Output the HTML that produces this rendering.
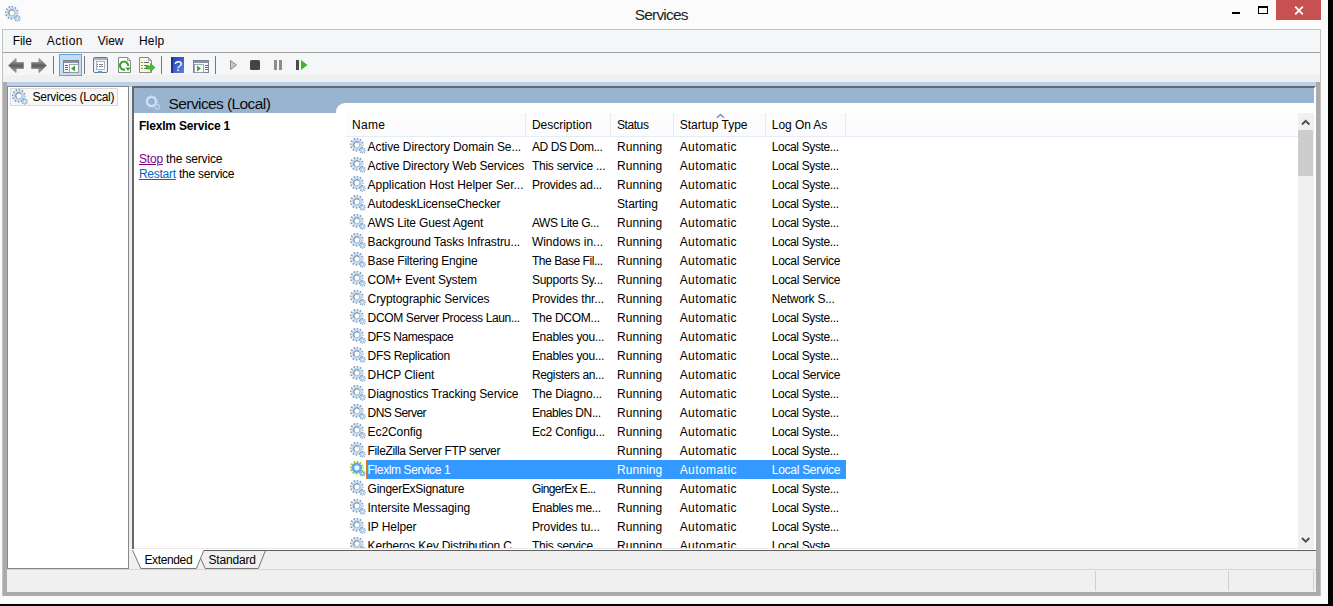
<!DOCTYPE html>
<html><head><meta charset="utf-8"><title>Services</title>
<style>
*{box-sizing:border-box;margin:0;padding:0}
html,body{width:1333px;height:606px;overflow:hidden;background:#000}
body{font-family:"Liberation Sans",sans-serif;font-size:12px;color:#000;position:relative}
div,span,svg{position:absolute;white-space:nowrap}
.t{white-space:pre}
#win{left:0;top:0;width:1328px;height:604px;background:#fbfbfb}
#min{left:1232px;top:12px;width:8px;height:2px;background:#000}
#max{left:1258px;top:6px;width:10px;height:8px;border:1px solid #000;border-top-width:2px}
#close{left:1276px;top:0;width:45px;height:20px;background:#c75050}
#frame{left:2px;top:29px;width:1319px;height:567px;background:#f0f0f0;border:1px solid #c2c2c2;border-bottom:0}
#menu{left:3px;top:30px;width:1317px;height:22px;background:#f5f6f7}
#menuline{left:3px;top:52px;width:1317px;height:1px;background:#a0a0a0}
#tool{left:3px;top:53px;width:1317px;height:22px;background:#f5f6f7}
#gl{left:3px;top:82px;width:4px;height:514px;background:#ababab}
#gr{left:1316px;top:82px;width:4px;height:514px;background:#ababab}
#gb{left:3px;top:592px;width:1317px;height:4px;background:#ababab}
#bluestrip{left:7px;top:82px;width:1309px;height:5px;background:#b9d1ea}
#tree{left:7px;top:86px;width:122px;height:483px;background:#fff;border:1px solid #828790}
#treeitem{left:10px;top:88px;width:108px;height:18px;background:#f7f7f7;border:1px solid #dadada}
#right{left:132px;top:86px;width:1184px;height:463px;background:#fff;border-top:2px solid #696969;border-left:2px solid #696969;border-right:2px solid #fdfdfd}
#hdr{left:134px;top:88px;width:1180px;height:25px;background:#99b4d1}
#list{left:336px;top:103px;width:978px;height:445px;background:#fff;border-top-left-radius:9px}
#lh{left:346px;top:113px;width:952px;height:24px;background:#fcfcfd;border-bottom:1px solid #e3ecf7}
.cs{top:113px;width:1px;height:23px;background:#e6ebf2}
#sel{left:366px;top:460px;width:480px;height:19px;background:#3399ff;border:1px dotted #d07a2a}
#sb{left:1298px;top:113px;width:16px;height:435px;background:#f0f0f0}
#thumb{left:1298px;top:130px;width:15px;height:46px;background:#cdcdcd}
#clip{left:0;top:0;width:1333px;height:548px;overflow:hidden}
#cov1{left:134px;top:548px;width:1180px;height:1px;background:#e9e9e9}
#cov2{left:134px;top:549px;width:1182px;height:1px;background:#fff}
#cov3{left:204px;top:550px;width:1112px;height:1px;background:#5e5e5e}
#tabs{left:132px;top:549px;width:1184px;height:21px}
#statline{left:7px;top:569px;width:1309px;height:1px;background:#d7d7d7}
.ss{top:571px;width:1px;height:20px;background:#d0d0d0}
</style></head><body>
<div id="win"></div>
<div id="min"></div><div id="max"></div>
<div id="close"><svg style="left:18px;top:6px;width:10px;height:9px" viewBox="0 0 10 9"><path d="M1.2 0.7L8.8 8.3M8.8 0.7L1.2 8.3" stroke="#fff" stroke-width="1.8" fill="none"/></svg></div>
<div id="frame"></div>
<div id="menu"></div>
<div id="menuline"></div>
<div id="tool"></div>
<svg id="tbsvg" style="left:0;top:53px;width:330px;height:24px" viewBox="0 53 330 24">
<defs>
<linearGradient id="ga" x1="0" y1="0" x2="0" y2="1"><stop offset="0" stop-color="#b8b8b8"/><stop offset=".5" stop-color="#5e5e5e"/><stop offset="1" stop-color="#a0a0a0"/></linearGradient>
<linearGradient id="gh" x1="0" y1="0" x2="1" y2="1"><stop offset="0" stop-color="#1f3fa8"/><stop offset="1" stop-color="#5b7fe0"/></linearGradient>
</defs>
<!-- back / forward -->
<path d="M8.5 65.5L16 58.5V62.5H23.5V68.5H16V72.5Z" fill="url(#ga)" stroke="#8e8e8e" stroke-width="1"/>
<path d="M46.5 65.5L39 58.5V62.5H31.5V68.5H39V72.5Z" fill="url(#ga)" stroke="#8e8e8e" stroke-width="1"/>
<rect x="53" y="56" width="1" height="18" fill="#777"/>
<!-- selected button -->
<rect x="59.5" y="54.5" width="22" height="21" fill="#c4dcf6" stroke="#62a2e4"/>
<rect x="63.5" y="60.5" width="15" height="12" fill="#f4f6fa" stroke="#7a8292"/>
<rect x="64" y="61" width="14" height="2" fill="#8a93a5"/>
<rect x="69.5" y="64.5" width="9" height="8" fill="#fdfdfd" stroke="#8a93a5" stroke-width=".8"/>
<path d="M65 65.5h3M65 67.5h3M65 69.5h3" stroke="#3a6fd0" stroke-width="1"/>
<path d="M71 68.5L75 65.5V71.5Z" fill="#3aa828"/>
<rect x="84" y="56" width="1" height="18" fill="#777"/>
<!-- properties -->
<rect x="93.500" y="57.5" width="14" height="15" rx="1.5" fill="#f2f4f8" stroke="#6d7380"/>
<rect x="94" y="58" width="13" height="2" fill="#aab2c2"/>
<rect x="96.500" y="61.5" width="8" height="8" fill="#fff" stroke="#9aa2b0" stroke-width=".8"/>
<path d="M99 64.500h4M99 66.500h4" stroke="#7a8292" stroke-width="1"/>
<path d="M97 64.500h1M97 66.500h1" stroke="#2a8ae0" stroke-width="1"/>
<rect x="98" y="71" width="4" height="2" fill="#2aa8f0"/>
<!-- refresh -->
<path d="M118.500 57.500H127.500L130.500 60.500V72.500H118.500Z" fill="#fff" stroke="#8a8a8a"/>
<path d="M127.500 57.500V60.500H130.500" fill="none" stroke="#8a8a8a" stroke-width=".8"/>
<path d="M128 66a4 4 0 1 0 -3 3.400" fill="none" stroke="#35a525" stroke-width="2.200"/>
<path d="M125.500 67.500H130.500L128 71Z" fill="#35a525"/>
<!-- export -->
<path d="M139.500 57.500H148.500L151.500 60.500V72.500H139.500Z" fill="#fbf6d9" stroke="#8a8a8a"/>
<path d="M148.500 57.500V60.500H151.500" fill="none" stroke="#8a8a8a" stroke-width=".8"/>
<path d="M144 62.500h5M144 65.500h4M144 68.500h4" stroke="#6a6a8a" stroke-width="1"/>
<path d="M141.500 62.500h1M141.500 65.500h1M141.500 68.500h1" stroke="#222" stroke-width="1"/>
<path d="M146 66h4.500V63.500L155 67.500L150.500 71.500V69H146Z" fill="#49b838" stroke="#2e9a22" stroke-width=".6"/>
<rect x="161" y="56" width="1" height="18" fill="#777"/>
<!-- help -->
<rect x="171" y="57" width="13" height="16" fill="url(#gh)"/>
<rect x="171" y="57" width="2" height="16" fill="#1b3596"/>
<text x="178.200" y="70.500" font-family="Liberation Sans, sans-serif" font-size="15" fill="#fff" text-anchor="middle">?</text>
<!-- action pane -->
<rect x="193.500" y="60.500" width="15" height="12" fill="#f4f6fa" stroke="#7a8292"/>
<rect x="194" y="61" width="14" height="2" fill="#8a93a5"/>
<rect x="194.500" y="64.500" width="9" height="8" fill="#fdfdfd" stroke="#8a93a5" stroke-width=".8"/>
<path d="M205 65.500h3M205 67.500h3M205 69.500h3" stroke="#3a6fd0" stroke-width="1"/>
<path d="M201 68.500L197 65.500V71.500Z" fill="#3aa828"/>
<rect x="215" y="56" width="1" height="18" fill="#777"/>
<!-- play -->
<path d="M230.500 60.500L236.500 65L230.500 69.500Z" fill="#c8c8c8" stroke="#8a8a8a"/>
<!-- stop -->
<rect x="250" y="60" width="10" height="10" rx="1.500" fill="#444"/>
<!-- pause -->
<rect x="274" y="60" width="3" height="10" fill="#8c8c8c"/>
<rect x="279" y="60" width="3" height="10" fill="#8c8c8c"/>
<!-- resume -->
<rect x="296" y="60" width="3" height="10" fill="#4a4a4a"/>
<path d="M301 60L307.500 65L301 70Z" fill="#3db824"/>
</svg>

<div id="gl"></div><div id="gr"></div><div id="gb"></div>
<div id="bluestrip"></div>
<div id="tree"></div>
<div id="treeitem"></div>
<div id="right"></div>
<div id="hdr"></div>
<div id="list"></div>
<div id="lh"></div>
<div class="cs" style="left:525px"></div><div class="cs" style="left:610px"></div><div class="cs" style="left:673px"></div><div class="cs" style="left:765px"></div><div class="cs" style="left:845px"></div>
<svg style="left:716px;top:113px;width:9px;height:6px" viewBox="0 0 9 6"><path d="M1 4.800L4.500 1.500L8 4.800" fill="none" stroke="#6f8fb3" stroke-width="1.300"/></svg>
<div id="sel"></div>
<div id="sb"></div><div id="thumb"></div>
<svg style="left:1298px;top:113px;width:16px;height:435px" viewBox="0 0 16 435"><path d="M4 11.500L7.700 7.800L11.400 11.500" fill="none" stroke="#505050" stroke-width="2"/><path d="M4 425L7.700 428.700L11.400 425" fill="none" stroke="#505050" stroke-width="2"/></svg>
<svg id="tabs" viewBox="132 549 1184 21">
<rect x="132" y="549" width="1184" height="1" fill="#fff"/>
<rect x="203" y="550" width="1113" height="1" fill="#696969"/>
<path d="M197 550.500L205.200 568.500H258.300L265.500 550.500" fill="#f0f0f0" stroke="#777" stroke-width="1"/>
<path d="M132.500 550L140.800 568.500H196.400L203.800 550Z" fill="#fff"/>
<path d="M132.500 550L140.800 568.500H196.400L203.800 550.500" fill="none" stroke="#777" stroke-width="1"/>
</svg>
<div id="statline"></div>
<div class="ss" style="left:1095px"></div><div class="ss" style="left:1228px"></div><div class="ss" style="left:1313px"></div>
<svg style="left:5px;top:6px;width:16px;height:16px" viewBox="0 0 16 16"><circle cx="6.75" cy="6.75" r="6" fill="none" stroke="#7c9ec4" stroke-width="1.8" stroke-dasharray="1.7 1.4416" stroke-dashoffset="0.85"/><circle cx="6.75" cy="6.75" r="4.1" fill="#fff" stroke="#c0d9f1" stroke-width="2.3"/><circle cx="6.75" cy="6.75" r="3.05" fill="none" stroke="#a3b1c0" stroke-width="0.8"/><path d="M4.6 8.9A3.05 3.05 0 0 1 8.9 4.6" fill="none" stroke="#6c737b" stroke-width="0.8"/><circle cx="12.5" cy="12.5" r="2.7" fill="none" stroke="#7fa3c9" stroke-width="1.3" stroke-dasharray="1.1 1.0206" stroke-dashoffset="0.55"/><circle cx="12.5" cy="12.5" r="1.7" fill="#fff" stroke="#a6c3e1" stroke-width="1.3"/></svg>
<svg style="left:12px;top:89px;width:16px;height:16px" viewBox="0 0 16 16"><circle cx="6.75" cy="6.75" r="6" fill="none" stroke="#7c9ec4" stroke-width="1.8" stroke-dasharray="1.7 1.4416" stroke-dashoffset="0.85"/><circle cx="6.75" cy="6.75" r="4.1" fill="#fff" stroke="#c0d9f1" stroke-width="2.3"/><circle cx="6.75" cy="6.75" r="3.05" fill="none" stroke="#a3b1c0" stroke-width="0.8"/><path d="M4.6 8.9A3.05 3.05 0 0 1 8.9 4.6" fill="none" stroke="#6c737b" stroke-width="0.8"/><circle cx="12.5" cy="12.5" r="2.7" fill="none" stroke="#7fa3c9" stroke-width="1.3" stroke-dasharray="1.1 1.0206" stroke-dashoffset="0.55"/><circle cx="12.5" cy="12.5" r="1.7" fill="#fff" stroke="#a6c3e1" stroke-width="1.3"/></svg>
<svg style="left:145px;top:95px;width:16px;height:16px" viewBox="0 0 16 16"><circle cx="6.500" cy="6.500" r="4.300" fill="none" stroke="#d3e4f5" stroke-width="2.400"/><circle cx="6.500" cy="6.500" r="5.700" fill="none" stroke="#bdd3ea" stroke-width="1.200" stroke-dasharray="1.800 1.800"/><circle cx="6.500" cy="6.500" r="2.900" fill="none" stroke="#8ea3ba" stroke-width=".800"/><circle cx="12.300" cy="12" r="2.200" fill="none" stroke="#b9cfe6" stroke-width="1.500"/></svg>
<div id="clip">
<svg style="left:350px;top:138px;width:16px;height:16px" viewBox="0 0 16 16"><circle cx="6.75" cy="6.75" r="6" fill="none" stroke="#7c9ec4" stroke-width="1.8" stroke-dasharray="1.7 1.4416" stroke-dashoffset="0.85"/><circle cx="6.75" cy="6.75" r="4.1" fill="#fff" stroke="#c0d9f1" stroke-width="2.3"/><circle cx="6.75" cy="6.75" r="3.05" fill="none" stroke="#a3b1c0" stroke-width="0.8"/><path d="M4.6 8.9A3.05 3.05 0 0 1 8.9 4.6" fill="none" stroke="#6c737b" stroke-width="0.8"/><circle cx="12.5" cy="12.5" r="2.7" fill="none" stroke="#7fa3c9" stroke-width="1.3" stroke-dasharray="1.1 1.0206" stroke-dashoffset="0.55"/><circle cx="12.5" cy="12.5" r="1.7" fill="#fff" stroke="#a6c3e1" stroke-width="1.3"/></svg>
<svg style="left:350px;top:157px;width:16px;height:16px" viewBox="0 0 16 16"><circle cx="6.75" cy="6.75" r="6" fill="none" stroke="#7c9ec4" stroke-width="1.8" stroke-dasharray="1.7 1.4416" stroke-dashoffset="0.85"/><circle cx="6.75" cy="6.75" r="4.1" fill="#fff" stroke="#c0d9f1" stroke-width="2.3"/><circle cx="6.75" cy="6.75" r="3.05" fill="none" stroke="#a3b1c0" stroke-width="0.8"/><path d="M4.6 8.9A3.05 3.05 0 0 1 8.9 4.6" fill="none" stroke="#6c737b" stroke-width="0.8"/><circle cx="12.5" cy="12.5" r="2.7" fill="none" stroke="#7fa3c9" stroke-width="1.3" stroke-dasharray="1.1 1.0206" stroke-dashoffset="0.55"/><circle cx="12.5" cy="12.5" r="1.7" fill="#fff" stroke="#a6c3e1" stroke-width="1.3"/></svg>
<svg style="left:350px;top:176px;width:16px;height:16px" viewBox="0 0 16 16"><circle cx="6.75" cy="6.75" r="6" fill="none" stroke="#7c9ec4" stroke-width="1.8" stroke-dasharray="1.7 1.4416" stroke-dashoffset="0.85"/><circle cx="6.75" cy="6.75" r="4.1" fill="#fff" stroke="#c0d9f1" stroke-width="2.3"/><circle cx="6.75" cy="6.75" r="3.05" fill="none" stroke="#a3b1c0" stroke-width="0.8"/><path d="M4.6 8.9A3.05 3.05 0 0 1 8.9 4.6" fill="none" stroke="#6c737b" stroke-width="0.8"/><circle cx="12.5" cy="12.5" r="2.7" fill="none" stroke="#7fa3c9" stroke-width="1.3" stroke-dasharray="1.1 1.0206" stroke-dashoffset="0.55"/><circle cx="12.5" cy="12.5" r="1.7" fill="#fff" stroke="#a6c3e1" stroke-width="1.3"/></svg>
<svg style="left:350px;top:195px;width:16px;height:16px" viewBox="0 0 16 16"><circle cx="6.75" cy="6.75" r="6" fill="none" stroke="#7c9ec4" stroke-width="1.8" stroke-dasharray="1.7 1.4416" stroke-dashoffset="0.85"/><circle cx="6.75" cy="6.75" r="4.1" fill="#fff" stroke="#c0d9f1" stroke-width="2.3"/><circle cx="6.75" cy="6.75" r="3.05" fill="none" stroke="#a3b1c0" stroke-width="0.8"/><path d="M4.6 8.9A3.05 3.05 0 0 1 8.9 4.6" fill="none" stroke="#6c737b" stroke-width="0.8"/><circle cx="12.5" cy="12.5" r="2.7" fill="none" stroke="#7fa3c9" stroke-width="1.3" stroke-dasharray="1.1 1.0206" stroke-dashoffset="0.55"/><circle cx="12.5" cy="12.5" r="1.7" fill="#fff" stroke="#a6c3e1" stroke-width="1.3"/></svg>
<svg style="left:350px;top:214px;width:16px;height:16px" viewBox="0 0 16 16"><circle cx="6.75" cy="6.75" r="6" fill="none" stroke="#7c9ec4" stroke-width="1.8" stroke-dasharray="1.7 1.4416" stroke-dashoffset="0.85"/><circle cx="6.75" cy="6.75" r="4.1" fill="#fff" stroke="#c0d9f1" stroke-width="2.3"/><circle cx="6.75" cy="6.75" r="3.05" fill="none" stroke="#a3b1c0" stroke-width="0.8"/><path d="M4.6 8.9A3.05 3.05 0 0 1 8.9 4.6" fill="none" stroke="#6c737b" stroke-width="0.8"/><circle cx="12.5" cy="12.5" r="2.7" fill="none" stroke="#7fa3c9" stroke-width="1.3" stroke-dasharray="1.1 1.0206" stroke-dashoffset="0.55"/><circle cx="12.5" cy="12.5" r="1.7" fill="#fff" stroke="#a6c3e1" stroke-width="1.3"/></svg>
<svg style="left:350px;top:233px;width:16px;height:16px" viewBox="0 0 16 16"><circle cx="6.75" cy="6.75" r="6" fill="none" stroke="#7c9ec4" stroke-width="1.8" stroke-dasharray="1.7 1.4416" stroke-dashoffset="0.85"/><circle cx="6.75" cy="6.75" r="4.1" fill="#fff" stroke="#c0d9f1" stroke-width="2.3"/><circle cx="6.75" cy="6.75" r="3.05" fill="none" stroke="#a3b1c0" stroke-width="0.8"/><path d="M4.6 8.9A3.05 3.05 0 0 1 8.9 4.6" fill="none" stroke="#6c737b" stroke-width="0.8"/><circle cx="12.5" cy="12.5" r="2.7" fill="none" stroke="#7fa3c9" stroke-width="1.3" stroke-dasharray="1.1 1.0206" stroke-dashoffset="0.55"/><circle cx="12.5" cy="12.5" r="1.7" fill="#fff" stroke="#a6c3e1" stroke-width="1.3"/></svg>
<svg style="left:350px;top:252px;width:16px;height:16px" viewBox="0 0 16 16"><circle cx="6.75" cy="6.75" r="6" fill="none" stroke="#7c9ec4" stroke-width="1.8" stroke-dasharray="1.7 1.4416" stroke-dashoffset="0.85"/><circle cx="6.75" cy="6.75" r="4.1" fill="#fff" stroke="#c0d9f1" stroke-width="2.3"/><circle cx="6.75" cy="6.75" r="3.05" fill="none" stroke="#a3b1c0" stroke-width="0.8"/><path d="M4.6 8.9A3.05 3.05 0 0 1 8.9 4.6" fill="none" stroke="#6c737b" stroke-width="0.8"/><circle cx="12.5" cy="12.5" r="2.7" fill="none" stroke="#7fa3c9" stroke-width="1.3" stroke-dasharray="1.1 1.0206" stroke-dashoffset="0.55"/><circle cx="12.5" cy="12.5" r="1.7" fill="#fff" stroke="#a6c3e1" stroke-width="1.3"/></svg>
<svg style="left:350px;top:271px;width:16px;height:16px" viewBox="0 0 16 16"><circle cx="6.75" cy="6.75" r="6" fill="none" stroke="#7c9ec4" stroke-width="1.8" stroke-dasharray="1.7 1.4416" stroke-dashoffset="0.85"/><circle cx="6.75" cy="6.75" r="4.1" fill="#fff" stroke="#c0d9f1" stroke-width="2.3"/><circle cx="6.75" cy="6.75" r="3.05" fill="none" stroke="#a3b1c0" stroke-width="0.8"/><path d="M4.6 8.9A3.05 3.05 0 0 1 8.9 4.6" fill="none" stroke="#6c737b" stroke-width="0.8"/><circle cx="12.5" cy="12.5" r="2.7" fill="none" stroke="#7fa3c9" stroke-width="1.3" stroke-dasharray="1.1 1.0206" stroke-dashoffset="0.55"/><circle cx="12.5" cy="12.5" r="1.7" fill="#fff" stroke="#a6c3e1" stroke-width="1.3"/></svg>
<svg style="left:350px;top:290px;width:16px;height:16px" viewBox="0 0 16 16"><circle cx="6.75" cy="6.75" r="6" fill="none" stroke="#7c9ec4" stroke-width="1.8" stroke-dasharray="1.7 1.4416" stroke-dashoffset="0.85"/><circle cx="6.75" cy="6.75" r="4.1" fill="#fff" stroke="#c0d9f1" stroke-width="2.3"/><circle cx="6.75" cy="6.75" r="3.05" fill="none" stroke="#a3b1c0" stroke-width="0.8"/><path d="M4.6 8.9A3.05 3.05 0 0 1 8.9 4.6" fill="none" stroke="#6c737b" stroke-width="0.8"/><circle cx="12.5" cy="12.5" r="2.7" fill="none" stroke="#7fa3c9" stroke-width="1.3" stroke-dasharray="1.1 1.0206" stroke-dashoffset="0.55"/><circle cx="12.5" cy="12.5" r="1.7" fill="#fff" stroke="#a6c3e1" stroke-width="1.3"/></svg>
<svg style="left:350px;top:309px;width:16px;height:16px" viewBox="0 0 16 16"><circle cx="6.75" cy="6.75" r="6" fill="none" stroke="#7c9ec4" stroke-width="1.8" stroke-dasharray="1.7 1.4416" stroke-dashoffset="0.85"/><circle cx="6.75" cy="6.75" r="4.1" fill="#fff" stroke="#c0d9f1" stroke-width="2.3"/><circle cx="6.75" cy="6.75" r="3.05" fill="none" stroke="#a3b1c0" stroke-width="0.8"/><path d="M4.6 8.9A3.05 3.05 0 0 1 8.9 4.6" fill="none" stroke="#6c737b" stroke-width="0.8"/><circle cx="12.5" cy="12.5" r="2.7" fill="none" stroke="#7fa3c9" stroke-width="1.3" stroke-dasharray="1.1 1.0206" stroke-dashoffset="0.55"/><circle cx="12.5" cy="12.5" r="1.7" fill="#fff" stroke="#a6c3e1" stroke-width="1.3"/></svg>
<svg style="left:350px;top:328px;width:16px;height:16px" viewBox="0 0 16 16"><circle cx="6.75" cy="6.75" r="6" fill="none" stroke="#7c9ec4" stroke-width="1.8" stroke-dasharray="1.7 1.4416" stroke-dashoffset="0.85"/><circle cx="6.75" cy="6.75" r="4.1" fill="#fff" stroke="#c0d9f1" stroke-width="2.3"/><circle cx="6.75" cy="6.75" r="3.05" fill="none" stroke="#a3b1c0" stroke-width="0.8"/><path d="M4.6 8.9A3.05 3.05 0 0 1 8.9 4.6" fill="none" stroke="#6c737b" stroke-width="0.8"/><circle cx="12.5" cy="12.5" r="2.7" fill="none" stroke="#7fa3c9" stroke-width="1.3" stroke-dasharray="1.1 1.0206" stroke-dashoffset="0.55"/><circle cx="12.5" cy="12.5" r="1.7" fill="#fff" stroke="#a6c3e1" stroke-width="1.3"/></svg>
<svg style="left:350px;top:347px;width:16px;height:16px" viewBox="0 0 16 16"><circle cx="6.75" cy="6.75" r="6" fill="none" stroke="#7c9ec4" stroke-width="1.8" stroke-dasharray="1.7 1.4416" stroke-dashoffset="0.85"/><circle cx="6.75" cy="6.75" r="4.1" fill="#fff" stroke="#c0d9f1" stroke-width="2.3"/><circle cx="6.75" cy="6.75" r="3.05" fill="none" stroke="#a3b1c0" stroke-width="0.8"/><path d="M4.6 8.9A3.05 3.05 0 0 1 8.9 4.6" fill="none" stroke="#6c737b" stroke-width="0.8"/><circle cx="12.5" cy="12.5" r="2.7" fill="none" stroke="#7fa3c9" stroke-width="1.3" stroke-dasharray="1.1 1.0206" stroke-dashoffset="0.55"/><circle cx="12.5" cy="12.5" r="1.7" fill="#fff" stroke="#a6c3e1" stroke-width="1.3"/></svg>
<svg style="left:350px;top:366px;width:16px;height:16px" viewBox="0 0 16 16"><circle cx="6.75" cy="6.75" r="6" fill="none" stroke="#7c9ec4" stroke-width="1.8" stroke-dasharray="1.7 1.4416" stroke-dashoffset="0.85"/><circle cx="6.75" cy="6.75" r="4.1" fill="#fff" stroke="#c0d9f1" stroke-width="2.3"/><circle cx="6.75" cy="6.75" r="3.05" fill="none" stroke="#a3b1c0" stroke-width="0.8"/><path d="M4.6 8.9A3.05 3.05 0 0 1 8.9 4.6" fill="none" stroke="#6c737b" stroke-width="0.8"/><circle cx="12.5" cy="12.5" r="2.7" fill="none" stroke="#7fa3c9" stroke-width="1.3" stroke-dasharray="1.1 1.0206" stroke-dashoffset="0.55"/><circle cx="12.5" cy="12.5" r="1.7" fill="#fff" stroke="#a6c3e1" stroke-width="1.3"/></svg>
<svg style="left:350px;top:385px;width:16px;height:16px" viewBox="0 0 16 16"><circle cx="6.75" cy="6.75" r="6" fill="none" stroke="#7c9ec4" stroke-width="1.8" stroke-dasharray="1.7 1.4416" stroke-dashoffset="0.85"/><circle cx="6.75" cy="6.75" r="4.1" fill="#fff" stroke="#c0d9f1" stroke-width="2.3"/><circle cx="6.75" cy="6.75" r="3.05" fill="none" stroke="#a3b1c0" stroke-width="0.8"/><path d="M4.6 8.9A3.05 3.05 0 0 1 8.9 4.6" fill="none" stroke="#6c737b" stroke-width="0.8"/><circle cx="12.5" cy="12.5" r="2.7" fill="none" stroke="#7fa3c9" stroke-width="1.3" stroke-dasharray="1.1 1.0206" stroke-dashoffset="0.55"/><circle cx="12.5" cy="12.5" r="1.7" fill="#fff" stroke="#a6c3e1" stroke-width="1.3"/></svg>
<svg style="left:350px;top:404px;width:16px;height:16px" viewBox="0 0 16 16"><circle cx="6.75" cy="6.75" r="6" fill="none" stroke="#7c9ec4" stroke-width="1.8" stroke-dasharray="1.7 1.4416" stroke-dashoffset="0.85"/><circle cx="6.75" cy="6.75" r="4.1" fill="#fff" stroke="#c0d9f1" stroke-width="2.3"/><circle cx="6.75" cy="6.75" r="3.05" fill="none" stroke="#a3b1c0" stroke-width="0.8"/><path d="M4.6 8.9A3.05 3.05 0 0 1 8.9 4.6" fill="none" stroke="#6c737b" stroke-width="0.8"/><circle cx="12.5" cy="12.5" r="2.7" fill="none" stroke="#7fa3c9" stroke-width="1.3" stroke-dasharray="1.1 1.0206" stroke-dashoffset="0.55"/><circle cx="12.5" cy="12.5" r="1.7" fill="#fff" stroke="#a6c3e1" stroke-width="1.3"/></svg>
<svg style="left:350px;top:423px;width:16px;height:16px" viewBox="0 0 16 16"><circle cx="6.75" cy="6.75" r="6" fill="none" stroke="#7c9ec4" stroke-width="1.8" stroke-dasharray="1.7 1.4416" stroke-dashoffset="0.85"/><circle cx="6.75" cy="6.75" r="4.1" fill="#fff" stroke="#c0d9f1" stroke-width="2.3"/><circle cx="6.75" cy="6.75" r="3.05" fill="none" stroke="#a3b1c0" stroke-width="0.8"/><path d="M4.6 8.9A3.05 3.05 0 0 1 8.9 4.6" fill="none" stroke="#6c737b" stroke-width="0.8"/><circle cx="12.5" cy="12.5" r="2.7" fill="none" stroke="#7fa3c9" stroke-width="1.3" stroke-dasharray="1.1 1.0206" stroke-dashoffset="0.55"/><circle cx="12.5" cy="12.5" r="1.7" fill="#fff" stroke="#a6c3e1" stroke-width="1.3"/></svg>
<svg style="left:350px;top:442px;width:16px;height:16px" viewBox="0 0 16 16"><circle cx="6.75" cy="6.75" r="6" fill="none" stroke="#7c9ec4" stroke-width="1.8" stroke-dasharray="1.7 1.4416" stroke-dashoffset="0.85"/><circle cx="6.75" cy="6.75" r="4.1" fill="#fff" stroke="#c0d9f1" stroke-width="2.3"/><circle cx="6.75" cy="6.75" r="3.05" fill="none" stroke="#a3b1c0" stroke-width="0.8"/><path d="M4.6 8.9A3.05 3.05 0 0 1 8.9 4.6" fill="none" stroke="#6c737b" stroke-width="0.8"/><circle cx="12.5" cy="12.5" r="2.7" fill="none" stroke="#7fa3c9" stroke-width="1.3" stroke-dasharray="1.1 1.0206" stroke-dashoffset="0.55"/><circle cx="12.5" cy="12.5" r="1.7" fill="#fff" stroke="#a6c3e1" stroke-width="1.3"/></svg>
<svg style="left:350px;top:461px;width:16px;height:16px" viewBox="0 0 16 16"><circle cx="6.75" cy="6.75" r="6" fill="none" stroke="#86d400" stroke-width="1.8" stroke-dasharray="1.7 1.4416" stroke-dashoffset="0.85"/><circle cx="6.75" cy="6.75" r="4.1" fill="#fff" stroke="#5ea2f2" stroke-width="2.3"/><circle cx="6.75" cy="6.75" r="3.05" fill="none" stroke="#6fa8ee" stroke-width="0.8"/><path d="M4.6 8.9A3.05 3.05 0 0 1 8.9 4.6" fill="none" stroke="#6fa8ee" stroke-width="0.8"/><circle cx="12.5" cy="12.5" r="2.7" fill="none" stroke="#7fc8a0" stroke-width="1.3" stroke-dasharray="1.1 1.0206" stroke-dashoffset="0.55"/><circle cx="12.5" cy="12.5" r="1.7" fill="#fff" stroke="#5ea2f2" stroke-width="1.3"/></svg>
<svg style="left:350px;top:480px;width:16px;height:16px" viewBox="0 0 16 16"><circle cx="6.75" cy="6.75" r="6" fill="none" stroke="#7c9ec4" stroke-width="1.8" stroke-dasharray="1.7 1.4416" stroke-dashoffset="0.85"/><circle cx="6.75" cy="6.75" r="4.1" fill="#fff" stroke="#c0d9f1" stroke-width="2.3"/><circle cx="6.75" cy="6.75" r="3.05" fill="none" stroke="#a3b1c0" stroke-width="0.8"/><path d="M4.6 8.9A3.05 3.05 0 0 1 8.9 4.6" fill="none" stroke="#6c737b" stroke-width="0.8"/><circle cx="12.5" cy="12.5" r="2.7" fill="none" stroke="#7fa3c9" stroke-width="1.3" stroke-dasharray="1.1 1.0206" stroke-dashoffset="0.55"/><circle cx="12.5" cy="12.5" r="1.7" fill="#fff" stroke="#a6c3e1" stroke-width="1.3"/></svg>
<svg style="left:350px;top:499px;width:16px;height:16px" viewBox="0 0 16 16"><circle cx="6.75" cy="6.75" r="6" fill="none" stroke="#7c9ec4" stroke-width="1.8" stroke-dasharray="1.7 1.4416" stroke-dashoffset="0.85"/><circle cx="6.75" cy="6.75" r="4.1" fill="#fff" stroke="#c0d9f1" stroke-width="2.3"/><circle cx="6.75" cy="6.75" r="3.05" fill="none" stroke="#a3b1c0" stroke-width="0.8"/><path d="M4.6 8.9A3.05 3.05 0 0 1 8.9 4.6" fill="none" stroke="#6c737b" stroke-width="0.8"/><circle cx="12.5" cy="12.5" r="2.7" fill="none" stroke="#7fa3c9" stroke-width="1.3" stroke-dasharray="1.1 1.0206" stroke-dashoffset="0.55"/><circle cx="12.5" cy="12.5" r="1.7" fill="#fff" stroke="#a6c3e1" stroke-width="1.3"/></svg>
<svg style="left:350px;top:518px;width:16px;height:16px" viewBox="0 0 16 16"><circle cx="6.75" cy="6.75" r="6" fill="none" stroke="#7c9ec4" stroke-width="1.8" stroke-dasharray="1.7 1.4416" stroke-dashoffset="0.85"/><circle cx="6.75" cy="6.75" r="4.1" fill="#fff" stroke="#c0d9f1" stroke-width="2.3"/><circle cx="6.75" cy="6.75" r="3.05" fill="none" stroke="#a3b1c0" stroke-width="0.8"/><path d="M4.6 8.9A3.05 3.05 0 0 1 8.9 4.6" fill="none" stroke="#6c737b" stroke-width="0.8"/><circle cx="12.5" cy="12.5" r="2.7" fill="none" stroke="#7fa3c9" stroke-width="1.3" stroke-dasharray="1.1 1.0206" stroke-dashoffset="0.55"/><circle cx="12.5" cy="12.5" r="1.7" fill="#fff" stroke="#a6c3e1" stroke-width="1.3"/></svg>
<svg style="left:350px;top:537px;width:16px;height:16px" viewBox="0 0 16 16"><circle cx="6.75" cy="6.75" r="6" fill="none" stroke="#7c9ec4" stroke-width="1.8" stroke-dasharray="1.7 1.4416" stroke-dashoffset="0.85"/><circle cx="6.75" cy="6.75" r="4.1" fill="#fff" stroke="#c0d9f1" stroke-width="2.3"/><circle cx="6.75" cy="6.75" r="3.05" fill="none" stroke="#a3b1c0" stroke-width="0.8"/><path d="M4.6 8.9A3.05 3.05 0 0 1 8.9 4.6" fill="none" stroke="#6c737b" stroke-width="0.8"/><circle cx="12.5" cy="12.5" r="2.7" fill="none" stroke="#7fa3c9" stroke-width="1.3" stroke-dasharray="1.1 1.0206" stroke-dashoffset="0.55"/><circle cx="12.5" cy="12.5" r="1.7" fill="#fff" stroke="#a6c3e1" stroke-width="1.3"/></svg>
<span class="t" style="left:367.6px;top:140.2px;font-size:12px;line-height:15.00px;letter-spacing:-0.111px">Active Directory Domain Se...</span>
<span class="t" style="left:531.9px;top:140.2px;font-size:12px;line-height:15.00px;letter-spacing:-0.396px">AD DS Dom...</span>
<span class="t" style="left:616.9px;top:140.2px;font-size:12px;line-height:15.00px;letter-spacing:0.083px">Running</span>
<span class="t" style="left:679.7px;top:140.2px;font-size:12px;line-height:15.00px;letter-spacing:0.430px">Automatic</span>
<span class="t" style="left:771.8px;top:140.2px;font-size:12px;line-height:15.00px;letter-spacing:-0.365px">Local Syste...</span>
<span class="t" style="left:367.6px;top:159.2px;font-size:12px;line-height:15.00px;letter-spacing:-0.159px">Active Directory Web Services</span>
<span class="t" style="left:531.9px;top:159.2px;font-size:12px;line-height:15.00px;letter-spacing:-0.251px">This service ...</span>
<span class="t" style="left:616.9px;top:159.2px;font-size:12px;line-height:15.00px;letter-spacing:0.083px">Running</span>
<span class="t" style="left:679.7px;top:159.2px;font-size:12px;line-height:15.00px;letter-spacing:0.430px">Automatic</span>
<span class="t" style="left:771.8px;top:159.2px;font-size:12px;line-height:15.00px;letter-spacing:-0.365px">Local Syste...</span>
<span class="t" style="left:367.6px;top:178.2px;font-size:12px;line-height:15.00px;letter-spacing:-0.029px">Application Host Helper Ser...</span>
<span class="t" style="left:531.9px;top:178.2px;font-size:12px;line-height:15.00px;letter-spacing:-0.237px">Provides ad...</span>
<span class="t" style="left:616.9px;top:178.2px;font-size:12px;line-height:15.00px;letter-spacing:0.083px">Running</span>
<span class="t" style="left:679.7px;top:178.2px;font-size:12px;line-height:15.00px;letter-spacing:0.430px">Automatic</span>
<span class="t" style="left:771.8px;top:178.2px;font-size:12px;line-height:15.00px;letter-spacing:-0.365px">Local Syste...</span>
<span class="t" style="left:367.6px;top:197.2px;font-size:12px;line-height:15.00px;letter-spacing:-0.147px">AutodeskLicenseChecker</span>
<span class="t" style="left:616.9px;top:197.2px;font-size:12px;line-height:15.00px;letter-spacing:-0.051px">Starting</span>
<span class="t" style="left:679.7px;top:197.2px;font-size:12px;line-height:15.00px;letter-spacing:0.430px">Automatic</span>
<span class="t" style="left:771.8px;top:197.2px;font-size:12px;line-height:15.00px;letter-spacing:-0.365px">Local Syste...</span>
<span class="t" style="left:367.6px;top:216.2px;font-size:12px;line-height:15.00px;letter-spacing:-0.166px">AWS Lite Guest Agent</span>
<span class="t" style="left:531.9px;top:216.2px;font-size:12px;line-height:15.00px;letter-spacing:-0.404px">AWS Lite G...</span>
<span class="t" style="left:616.9px;top:216.2px;font-size:12px;line-height:15.00px;letter-spacing:0.083px">Running</span>
<span class="t" style="left:679.7px;top:216.2px;font-size:12px;line-height:15.00px;letter-spacing:0.430px">Automatic</span>
<span class="t" style="left:771.8px;top:216.2px;font-size:12px;line-height:15.00px;letter-spacing:-0.365px">Local Syste...</span>
<span class="t" style="left:367.6px;top:235.2px;font-size:12px;line-height:15.00px;letter-spacing:-0.092px">Background Tasks Infrastru...</span>
<span class="t" style="left:531.9px;top:235.2px;font-size:12px;line-height:15.00px;letter-spacing:-0.013px">Windows in...</span>
<span class="t" style="left:616.9px;top:235.2px;font-size:12px;line-height:15.00px;letter-spacing:0.083px">Running</span>
<span class="t" style="left:679.7px;top:235.2px;font-size:12px;line-height:15.00px;letter-spacing:0.430px">Automatic</span>
<span class="t" style="left:771.8px;top:235.2px;font-size:12px;line-height:15.00px;letter-spacing:-0.365px">Local Syste...</span>
<span class="t" style="left:367.6px;top:254.2px;font-size:12px;line-height:15.00px;letter-spacing:-0.204px">Base Filtering Engine</span>
<span class="t" style="left:531.9px;top:254.2px;font-size:12px;line-height:15.00px;letter-spacing:-0.441px">The Base Fil...</span>
<span class="t" style="left:616.9px;top:254.2px;font-size:12px;line-height:15.00px;letter-spacing:0.083px">Running</span>
<span class="t" style="left:679.7px;top:254.2px;font-size:12px;line-height:15.00px;letter-spacing:0.430px">Automatic</span>
<span class="t" style="left:771.8px;top:254.2px;font-size:12px;line-height:15.00px;letter-spacing:-0.279px">Local Service</span>
<span class="t" style="left:367.6px;top:273.2px;font-size:12px;line-height:15.00px;letter-spacing:-0.180px">COM+ Event System</span>
<span class="t" style="left:531.9px;top:273.2px;font-size:12px;line-height:15.00px;letter-spacing:-0.253px">Supports Sy...</span>
<span class="t" style="left:616.9px;top:273.2px;font-size:12px;line-height:15.00px;letter-spacing:0.083px">Running</span>
<span class="t" style="left:679.7px;top:273.2px;font-size:12px;line-height:15.00px;letter-spacing:0.430px">Automatic</span>
<span class="t" style="left:771.8px;top:273.2px;font-size:12px;line-height:15.00px;letter-spacing:-0.279px">Local Service</span>
<span class="t" style="left:367.6px;top:292.2px;font-size:12px;line-height:15.00px;letter-spacing:-0.103px">Cryptographic Services</span>
<span class="t" style="left:531.9px;top:292.2px;font-size:12px;line-height:15.00px;letter-spacing:-0.077px">Provides thr...</span>
<span class="t" style="left:616.9px;top:292.2px;font-size:12px;line-height:15.00px;letter-spacing:0.083px">Running</span>
<span class="t" style="left:679.7px;top:292.2px;font-size:12px;line-height:15.00px;letter-spacing:0.430px">Automatic</span>
<span class="t" style="left:771.8px;top:292.2px;font-size:12px;line-height:15.00px;letter-spacing:-0.214px">Network S...</span>
<span class="t" style="left:367.6px;top:311.2px;font-size:12px;line-height:15.00px;letter-spacing:-0.364px">DCOM Server Process Laun...</span>
<span class="t" style="left:531.9px;top:311.2px;font-size:12px;line-height:15.00px;letter-spacing:-0.249px">The DCOM...</span>
<span class="t" style="left:616.9px;top:311.2px;font-size:12px;line-height:15.00px;letter-spacing:0.083px">Running</span>
<span class="t" style="left:679.7px;top:311.2px;font-size:12px;line-height:15.00px;letter-spacing:0.430px">Automatic</span>
<span class="t" style="left:771.8px;top:311.2px;font-size:12px;line-height:15.00px;letter-spacing:-0.365px">Local Syste...</span>
<span class="t" style="left:367.6px;top:330.2px;font-size:12px;line-height:15.00px;letter-spacing:-0.440px">DFS Namespace</span>
<span class="t" style="left:531.9px;top:330.2px;font-size:12px;line-height:15.00px;letter-spacing:-0.274px">Enables you...</span>
<span class="t" style="left:616.9px;top:330.2px;font-size:12px;line-height:15.00px;letter-spacing:0.083px">Running</span>
<span class="t" style="left:679.7px;top:330.2px;font-size:12px;line-height:15.00px;letter-spacing:0.430px">Automatic</span>
<span class="t" style="left:771.8px;top:330.2px;font-size:12px;line-height:15.00px;letter-spacing:-0.365px">Local Syste...</span>
<span class="t" style="left:367.6px;top:349.2px;font-size:12px;line-height:15.00px;letter-spacing:-0.300px">DFS Replication</span>
<span class="t" style="left:531.9px;top:349.2px;font-size:12px;line-height:15.00px;letter-spacing:-0.274px">Enables you...</span>
<span class="t" style="left:616.9px;top:349.2px;font-size:12px;line-height:15.00px;letter-spacing:0.083px">Running</span>
<span class="t" style="left:679.7px;top:349.2px;font-size:12px;line-height:15.00px;letter-spacing:0.430px">Automatic</span>
<span class="t" style="left:771.8px;top:349.2px;font-size:12px;line-height:15.00px;letter-spacing:-0.365px">Local Syste...</span>
<span class="t" style="left:367.6px;top:368.2px;font-size:12px;line-height:15.00px;letter-spacing:-0.101px">DHCP Client</span>
<span class="t" style="left:531.9px;top:368.2px;font-size:12px;line-height:15.00px;letter-spacing:-0.348px">Registers an...</span>
<span class="t" style="left:616.9px;top:368.2px;font-size:12px;line-height:15.00px;letter-spacing:0.083px">Running</span>
<span class="t" style="left:679.7px;top:368.2px;font-size:12px;line-height:15.00px;letter-spacing:0.430px">Automatic</span>
<span class="t" style="left:771.8px;top:368.2px;font-size:12px;line-height:15.00px;letter-spacing:-0.279px">Local Service</span>
<span class="t" style="left:367.6px;top:387.2px;font-size:12px;line-height:15.00px;letter-spacing:-0.117px">Diagnostics Tracking Service</span>
<span class="t" style="left:531.9px;top:387.2px;font-size:12px;line-height:15.00px;letter-spacing:-0.146px">The Diagno...</span>
<span class="t" style="left:616.9px;top:387.2px;font-size:12px;line-height:15.00px;letter-spacing:0.083px">Running</span>
<span class="t" style="left:679.7px;top:387.2px;font-size:12px;line-height:15.00px;letter-spacing:0.430px">Automatic</span>
<span class="t" style="left:771.8px;top:387.2px;font-size:12px;line-height:15.00px;letter-spacing:-0.365px">Local Syste...</span>
<span class="t" style="left:367.6px;top:406.2px;font-size:12px;line-height:15.00px;letter-spacing:-0.568px">DNS Server</span>
<span class="t" style="left:531.9px;top:406.2px;font-size:12px;line-height:15.00px;letter-spacing:-0.404px">Enables DN...</span>
<span class="t" style="left:616.9px;top:406.2px;font-size:12px;line-height:15.00px;letter-spacing:0.083px">Running</span>
<span class="t" style="left:679.7px;top:406.2px;font-size:12px;line-height:15.00px;letter-spacing:0.430px">Automatic</span>
<span class="t" style="left:771.8px;top:406.2px;font-size:12px;line-height:15.00px;letter-spacing:-0.365px">Local Syste...</span>
<span class="t" style="left:367.6px;top:425.2px;font-size:12px;line-height:15.00px;letter-spacing:-0.084px">Ec2Config</span>
<span class="t" style="left:531.9px;top:425.2px;font-size:12px;line-height:15.00px;letter-spacing:-0.160px">Ec2 Configu...</span>
<span class="t" style="left:616.9px;top:425.2px;font-size:12px;line-height:15.00px;letter-spacing:0.083px">Running</span>
<span class="t" style="left:679.7px;top:425.2px;font-size:12px;line-height:15.00px;letter-spacing:0.430px">Automatic</span>
<span class="t" style="left:771.8px;top:425.2px;font-size:12px;line-height:15.00px;letter-spacing:-0.365px">Local Syste...</span>
<span class="t" style="left:367.6px;top:444.2px;font-size:12px;line-height:15.00px;letter-spacing:-0.372px">FileZilla Server FTP server</span>
<span class="t" style="left:616.9px;top:444.2px;font-size:12px;line-height:15.00px;letter-spacing:0.083px">Running</span>
<span class="t" style="left:679.7px;top:444.2px;font-size:12px;line-height:15.00px;letter-spacing:0.430px">Automatic</span>
<span class="t" style="left:771.8px;top:444.2px;font-size:12px;line-height:15.00px;letter-spacing:-0.365px">Local Syste...</span>
<span class="t" style="left:367.6px;top:463.2px;font-size:12px;line-height:15.00px;letter-spacing:-0.379px;color:#fff">Flexlm Service 1</span>
<span class="t" style="left:616.9px;top:463.2px;font-size:12px;line-height:15.00px;letter-spacing:0.083px;color:#fff">Running</span>
<span class="t" style="left:679.7px;top:463.2px;font-size:12px;line-height:15.00px;letter-spacing:0.430px;color:#fff">Automatic</span>
<span class="t" style="left:771.8px;top:463.2px;font-size:12px;line-height:15.00px;letter-spacing:-0.279px;color:#fff">Local Service</span>
<span class="t" style="left:367.6px;top:482.2px;font-size:12px;line-height:15.00px;letter-spacing:-0.287px">GingerExSignature</span>
<span class="t" style="left:531.9px;top:482.2px;font-size:12px;line-height:15.00px;letter-spacing:-0.598px">GingerEx E...</span>
<span class="t" style="left:616.9px;top:482.2px;font-size:12px;line-height:15.00px;letter-spacing:0.083px">Running</span>
<span class="t" style="left:679.7px;top:482.2px;font-size:12px;line-height:15.00px;letter-spacing:0.430px">Automatic</span>
<span class="t" style="left:771.8px;top:482.2px;font-size:12px;line-height:15.00px;letter-spacing:-0.365px">Local Syste...</span>
<span class="t" style="left:367.6px;top:501.2px;font-size:12px;line-height:15.00px;letter-spacing:-0.081px">Intersite Messaging</span>
<span class="t" style="left:531.9px;top:501.2px;font-size:12px;line-height:15.00px;letter-spacing:-0.348px">Enables me...</span>
<span class="t" style="left:616.9px;top:501.2px;font-size:12px;line-height:15.00px;letter-spacing:0.083px">Running</span>
<span class="t" style="left:679.7px;top:501.2px;font-size:12px;line-height:15.00px;letter-spacing:0.430px">Automatic</span>
<span class="t" style="left:771.8px;top:501.2px;font-size:12px;line-height:15.00px;letter-spacing:-0.365px">Local Syste...</span>
<span class="t" style="left:367.6px;top:520.2px;font-size:12px;line-height:15.00px;letter-spacing:-0.102px">IP Helper</span>
<span class="t" style="left:531.9px;top:520.2px;font-size:12px;line-height:15.00px;letter-spacing:-0.141px">Provides tu...</span>
<span class="t" style="left:616.9px;top:520.2px;font-size:12px;line-height:15.00px;letter-spacing:0.083px">Running</span>
<span class="t" style="left:679.7px;top:520.2px;font-size:12px;line-height:15.00px;letter-spacing:0.430px">Automatic</span>
<span class="t" style="left:771.8px;top:520.2px;font-size:12px;line-height:15.00px;letter-spacing:-0.365px">Local Syste...</span>
<span class="t" style="left:367.6px;top:539.2px;font-size:12px;line-height:15.00px;letter-spacing:-0.140px">Kerberos Key Distribution C...</span>
<span class="t" style="left:531.9px;top:539.2px;font-size:12px;line-height:15.00px;letter-spacing:-0.251px">This service ...</span>
<span class="t" style="left:616.9px;top:539.2px;font-size:12px;line-height:15.00px;letter-spacing:0.083px">Running</span>
<span class="t" style="left:679.7px;top:539.2px;font-size:12px;line-height:15.00px;letter-spacing:0.430px">Automatic</span>
<span class="t" style="left:771.8px;top:539.2px;font-size:12px;line-height:15.00px;letter-spacing:-0.365px">Local Syste...</span>
</div>
<span class="t" style="left:634.7px;top:4.6px;font-size:15.5px;line-height:19.38px;letter-spacing:-0.805px;color:#1e1e1e">Services</span>
<span class="t" style="left:12.7px;top:34.2px;font-size:12px;line-height:15.00px;letter-spacing:-0.048px">File</span>
<span class="t" style="left:46.8px;top:34.2px;font-size:12px;line-height:15.00px;letter-spacing:0.468px">Action</span>
<span class="t" style="left:97.7px;top:34.2px;font-size:12px;line-height:15.00px;letter-spacing:0.001px">View</span>
<span class="t" style="left:139.0px;top:34.2px;font-size:12px;line-height:15.00px;letter-spacing:0.204px">Help</span>
<span class="t" style="left:32.5px;top:90.2px;font-size:12px;line-height:15.00px;letter-spacing:-0.269px">Services (Local)</span>
<span class="t" style="left:168.6px;top:93.8px;font-size:15.5px;line-height:19.38px;letter-spacing:-0.595px;color:#0c0c0c">Services (Local)</span>
<span class="t" style="left:138.9px;top:119.2px;font-size:12px;line-height:15.00px;letter-spacing:-0.177px;font-weight:700">Flexlm Service 1</span>
<span class="t" style="left:351.9px;top:118.2px;font-size:12px;line-height:15.00px;letter-spacing:0.328px">Name</span>
<span class="t" style="left:531.9px;top:118.2px;font-size:12px;line-height:15.00px;letter-spacing:-0.003px">Description</span>
<span class="t" style="left:616.9px;top:118.2px;font-size:12px;line-height:15.00px;letter-spacing:-0.406px">Status</span>
<span class="t" style="left:679.7px;top:118.2px;font-size:12px;line-height:15.00px;letter-spacing:-0.003px">Startup Type</span>
<span class="t" style="left:771.8px;top:118.2px;font-size:12px;line-height:15.00px;letter-spacing:-0.068px">Log On As</span>
<span class="t" style="left:144.4px;top:552.8px;font-size:12px;line-height:15.00px;letter-spacing:-0.360px">Extended</span>
<span class="t" style="left:208.4px;top:552.8px;font-size:12px;line-height:15.00px;letter-spacing:-0.172px">Standard</span>
<span class="t" style="left:138.9px;top:152.2px;line-height:15px;letter-spacing:-0.170px"><u style="color:#800080">Stop</u> the service</span>
<span class="t" style="left:138.9px;top:167.2px;line-height:15px;letter-spacing:-0.247px"><u style="color:#0066cc">Restart</u> the service</span>
<div id="cov1"></div><div id="cov2"></div><div id="cov3"></div>
</body></html>
